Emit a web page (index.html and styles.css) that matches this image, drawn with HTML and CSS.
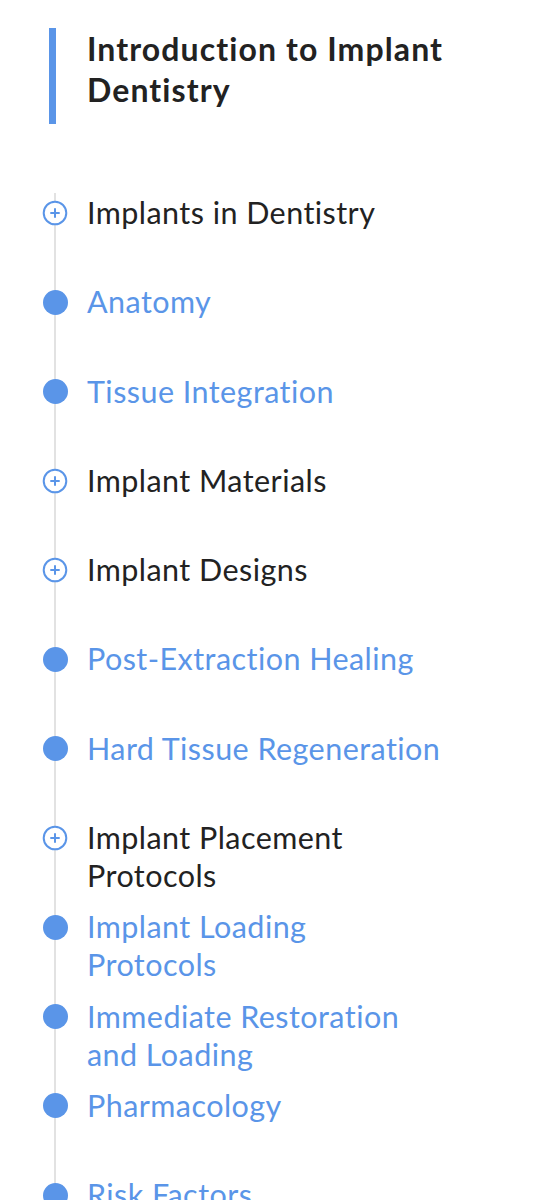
FILE: index.html
```html
<!DOCTYPE html>
<html>
<head>
<meta charset="utf-8">
<link rel="stylesheet" href="styles.css">
</head>
<body>
<div class="page">
  <div class="title-block">
    <h1 class="title">Introduction to Implant Dentistry</h1>
  </div>
  <ul class="timeline">
    <li class="item group"><span class="icon"><svg width="26" height="26" viewBox="0 0 26 26"><circle cx="13" cy="13" r="11.3" fill="#ffffff" stroke="#5a95e8" stroke-width="2"/><path d="M13 8.3v9.4M8.3 13h9.4" stroke="#5a95e8" stroke-width="2"/></svg></span><span class="label">Implants in Dentistry</span></li>
    <li class="item leaf"><span class="icon"><span class="dot"></span></span><span class="label">Anatomy</span></li>
    <li class="item leaf"><span class="icon"><span class="dot"></span></span><span class="label">Tissue Integration</span></li>
    <li class="item group"><span class="icon"><svg width="26" height="26" viewBox="0 0 26 26"><circle cx="13" cy="13" r="11.3" fill="#ffffff" stroke="#5a95e8" stroke-width="2"/><path d="M13 8.3v9.4M8.3 13h9.4" stroke="#5a95e8" stroke-width="2"/></svg></span><span class="label">Implant Materials</span></li>
    <li class="item group"><span class="icon"><svg width="26" height="26" viewBox="0 0 26 26"><circle cx="13" cy="13" r="11.3" fill="#ffffff" stroke="#5a95e8" stroke-width="2"/><path d="M13 8.3v9.4M8.3 13h9.4" stroke="#5a95e8" stroke-width="2"/></svg></span><span class="label">Implant Designs</span></li>
    <li class="item leaf"><span class="icon"><span class="dot"></span></span><span class="label">Post-Extraction Healing</span></li>
    <li class="item leaf"><span class="icon"><span class="dot"></span></span><span class="label">Hard Tissue Regeneration</span></li>
    <li class="item group"><span class="icon"><svg width="26" height="26" viewBox="0 0 26 26"><circle cx="13" cy="13" r="11.3" fill="#ffffff" stroke="#5a95e8" stroke-width="2"/><path d="M13 8.3v9.4M8.3 13h9.4" stroke="#5a95e8" stroke-width="2"/></svg></span><span class="label">Implant Placement Protocols</span></li>
    <li class="item leaf"><span class="icon"><span class="dot"></span></span><span class="label">Implant Loading Protocols</span></li>
    <li class="item leaf"><span class="icon"><span class="dot"></span></span><span class="label">Immediate Restoration and Loading</span></li>
    <li class="item leaf"><span class="icon"><span class="dot"></span></span><span class="label">Pharmacology</span></li>
    <li class="item leaf"><span class="icon"><span class="dot"></span></span><span class="label">Risk Factors</span></li>
  </ul>
</div>
</body>
</html>
```

FILE: styles.css
```css
html, body {
  margin: 0;
  padding: 0;
  background: #ffffff;
}
body {
  font-family: "Lato", "Noto Sans", sans-serif;
  color: #222222;
  font-variant-ligatures: none;
}
.page {
  padding: 28px 0 0 49px;
}
.title-block {
  width: 400px;
  border-left: 7px solid #5a95e8;
  padding: 0 0 14px 31px;
}
.title {
  margin: 0;
  font-size: 32px;
  font-weight: 700;
  letter-spacing: 1.1px;
  line-height: 41px;
  color: #222222;
}
.timeline {
  width: 393px;
  list-style: none;
  margin: 69px 0 0 0;
  padding: 0;
  position: relative;
}
.timeline::before {
  content: "";
  position: absolute;
  left: 5px;
  top: 0;
  bottom: 0;
  width: 2px;
  background: #e2e2e2;
}
.item {
  display: flex;
  align-items: flex-start;
  min-height: 89.3px;
  position: relative;
}
.icon {
  flex: 0 0 26px;
  height: 40px;
  margin-left: -7px;
  margin-right: 19px;
  display: flex;
  align-items: center;
  justify-content: center;
}
.icon svg {
  display: block;
}
.dot {
  width: 25px;
  height: 25px;
  border-radius: 50%;
  background: #5a95e8;
}
.label {
  font-size: 30.5px;
  letter-spacing: 0.45px;
  line-height: 38px;
  flex: 1;
}
.leaf .label {
  color: #5a95e8;
}
.group .label {
  color: #222222;
}
```
